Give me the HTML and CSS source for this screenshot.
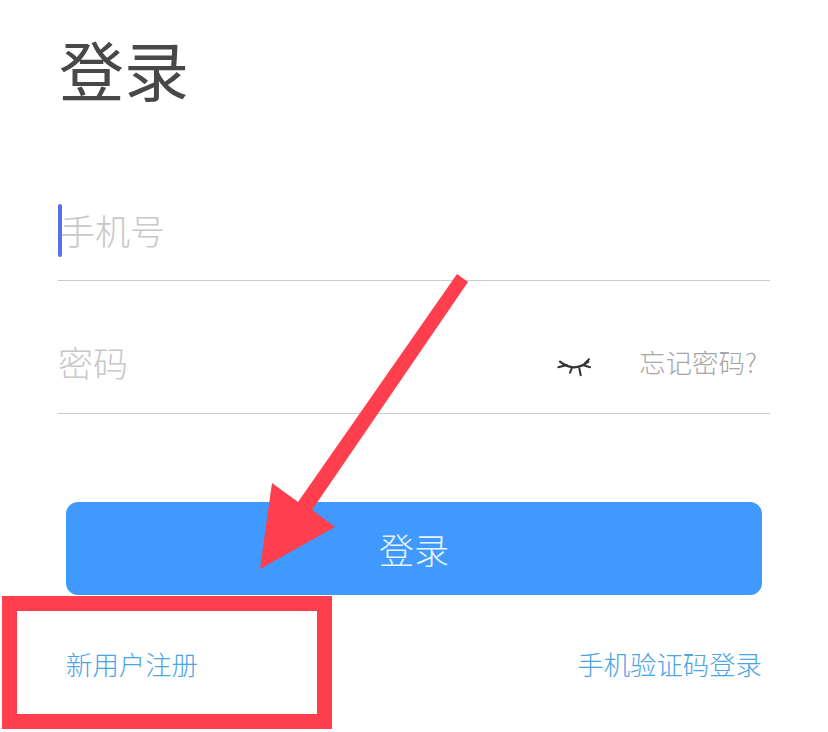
FILE: index.html
```html
<!DOCTYPE html>
<html lang="zh-CN">
<head>
<meta charset="utf-8">
<title>登录</title>
<link rel="stylesheet" href="styles.css">
</head>
<body>
<main class="page">
  <h1 class="title">登录</h1>
  <form class="form">
    <div class="field field-phone">
      <span class="caret"></span>
      <span class="placeholder">手机号</span>
    </div>
    <div class="field field-password">
      <span class="placeholder">密码</span>
      <span class="field-tools">
        <svg class="eye" viewBox="0 0 34 22" width="34" height="22" aria-hidden="true">
          <path d="M3 4.7Q17 16 31.3 4.7" fill="none" stroke="#333" stroke-width="2.2" stroke-linecap="round"/>
          <path d="M1.3 10.3L9.7 8M14.7 11.3L13 15.7M22.3 11.3L23.7 18.3M25.7 8L33 10.3M28 6.3L32 2.3" fill="none" stroke="#333" stroke-width="2" stroke-linecap="round"/>
        </svg>
        <span class="forgot">忘记密码?</span>
      </span>
    </div>
    <button class="submit" type="button">登录</button>
    <div class="links">
      <a class="link">新用户注册</a>
      <a class="link">手机验证码登录</a>
    </div>
  </form>
</main>
<div class="mark-box"></div>
<svg class="mark-arrow" viewBox="0 0 828 732" width="828" height="732" aria-hidden="true">
  <polygon points="457,274 468,282 312,510 335,527 260,569 272,483 298,502" fill="#ff3f4d"/>
</svg>
</body>
</html>
```

FILE: styles.css
```css
* { box-sizing: border-box; }
html, body { margin: 0; padding: 0; background: #fff; }
body {
  width: 828px;
  height: 732px;
  overflow: hidden;
  position: relative;
  font-family: "Noto Sans CJK SC", "Liberation Sans", sans-serif;
}
.page { padding: 31px 58px 0; }
.title {
  margin: 0 0 0 1px;
  font-size: 65px;
  line-height: 74px;
  font-weight: 400;
  color: #484848;
}
.form { margin-top: 42px; }
.field {
  display: flex;
  align-items: center;
  height: 133px;
  border-bottom: 1px solid #cbcbcb;
}
.field-phone {
  height: 134px;
  padding-top: 33px;
  position: relative;
  width: 712px;
}
.field-password { justify-content: space-between; padding-top: 30px; width: 712px; }
.placeholder { font-size: 35px; line-height: 46px; font-weight: 300; color: #c8c8ca; }
.field-phone .placeholder { margin-left: 2px; }
.caret {
  position: absolute;
  left: 0;
  top: 57px;
  width: 4px;
  height: 53px;
  border-radius: 2px;
  background: #5a6fe8;
}
.field-tools { display: flex; align-items: center; }
.eye { margin-right: 48px; margin-top: 11px; }
.forgot {
  margin-right: 13px;
  font-size: 26.5px;
  line-height: 32px;
  font-weight: 300;
  color: #a6a6a8;
}
.submit {
  display: block;
  width: 696px;
  height: 93px;
  margin: 88px 0 0 8px;
  padding: 0;
  border: 0;
  border-radius: 12px;
  background: #3f99ff;
  color: #e8f5ff;
  font: 300 35px/46px "Noto Sans CJK SC", "Liberation Sans", sans-serif;
}
.links {
  display: flex;
  justify-content: space-between;
  width: 696px;
  margin: 51px 0 0 8px;
}
.link { font-size: 26.4px; line-height: 36px; font-weight: 300; color: #4ba4e4; }
.mark-box {
  position: absolute;
  left: 2px;
  top: 596px;
  width: 330px;
  height: 133px;
  border: 15px solid #ff3f4d;
}
.mark-arrow { position: absolute; left: 0; top: 0; }
```
